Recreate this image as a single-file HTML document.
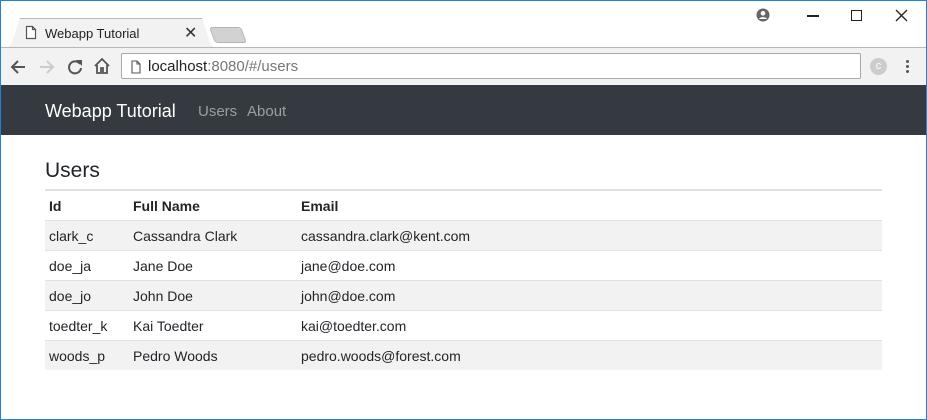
<!DOCTYPE html>
<html><head><style>
*{margin:0;padding:0;box-sizing:border-box}
body{width:927px;height:420px;overflow:hidden;background:#fff;font-family:"Liberation Sans",sans-serif;position:relative}
.frame{position:absolute;inset:0;border:1px solid #1a84d8;pointer-events:none;z-index:10}
.abs{position:absolute}
.tab{position:absolute;left:10px;top:18px;width:202px;height:30px;background:#f2f2f2;border:1px solid #b8b8b8;border-bottom:none;clip-path:polygon(0 100%,10px 0,calc(100% - 10px) 0,100% 100%);}
.toolbar{position:absolute;left:0;top:47px;width:927px;height:38px;background:#f2f2f2;border-top:1px solid #b8b8b8}
.addr{position:absolute;left:121px;top:5px;width:740px;height:26px;background:#fff;border:1px solid #a9a9a9;border-radius:2px}
.nav{position:absolute;left:0;top:85px;width:927px;height:50px;background:#343a40}
table{position:absolute;left:45px;top:189px;width:837px;border-collapse:collapse;font-size:14px;color:#212529}
td,th{height:30px;padding:1px 4px 0;text-align:left;border-top:1px solid #dee2e6;vertical-align:middle}
th{font-weight:bold;border-top:2px solid #dee2e6;border-bottom:1px solid #dee2e6;height:30px}
tr.s td{background:#f2f2f2}
</style></head><body>
<div class="frame"></div>
<div class="tab"></div>
<svg class="abs" style="left:25px;top:25px" width="12" height="15"><path d="M1.5 1.5h6l3 3v9h-9z M7.5 1.5v3h3" fill="#fff" stroke="#555" stroke-width="1.2"/></svg>
<div class="abs" style="left:45px;top:26px;font-size:13px;color:#222">Webapp Tutorial</div>
<div class="abs" style="left:184px;top:23px;font-size:16px;color:#333">✕</div>
<div class="abs" style="left:212px;top:27px;width:32px;height:16px;background:#d2d2d2;border:1px solid #b5b5b5;border-radius:3px;transform:skewX(20deg)"></div>
<svg class="abs" style="left:756px;top:8px" width="14" height="14"><circle cx="7" cy="7" r="6.5" fill="#666"/><circle cx="7" cy="5.3" r="2.3" fill="#fff"/><path d="M3 11c1-2.5 7-2.5 8 0" fill="#fff"/></svg>
<div class="abs" style="left:807px;top:15px;width:12px;height:1.5px;background:#222"></div>
<div class="abs" style="left:851px;top:10px;width:11px;height:11px;border:1.3px solid #222"></div>
<svg class="abs" style="left:895px;top:9px" width="13" height="13"><path d="M1 1L12 12M12 1L1 12" stroke="#222" stroke-width="1.3"/></svg>
<div class="toolbar">
<svg class="abs" style="left:10px;top:11px" width="16" height="16"><path d="M15 8H2M8 2L2 8l6 6" fill="none" stroke="#555" stroke-width="2"/></svg>
<svg class="abs" style="left:39px;top:11px" width="16" height="16"><path d="M1 8h13M8 2l6 6-6 6" fill="none" stroke="#ccc" stroke-width="2"/></svg>
<svg class="abs" style="left:67px;top:11px" width="16" height="16"><path d="M13 5A6 6 0 1 0 14 9" fill="none" stroke="#555" stroke-width="2"/><path d="M9 1h6v6z" fill="#555"/></svg>
<svg class="abs" style="left:93px;top:9px" width="18" height="18"><path d="M2 9L9 2l7 7M4 8v8h4v-5h2v5h4V8" fill="none" stroke="#555" stroke-width="1.8"/></svg>
<div class="addr">
<svg class="abs" style="left:9px;top:6px" width="11" height="14"><path d="M1 1h5l3 3v9H1z M6 1v3h3" fill="none" stroke="#555" stroke-width="1.1"/></svg>
<div class="abs" style="left:26px;top:4px;font-size:15px;color:#222">localhost<span style="color:#777">:8080/#/users</span></div>
</div>
<div class="abs" style="left:870px;top:10px;width:17px;height:17px;border-radius:50%;background:#ccc;color:#fff;font-size:11px;text-align:center;line-height:17px">c</div>
<div class="abs" style="left:906px;top:12px;width:3px;height:3px;background:#555;border-radius:50%;box-shadow:0 5px 0 #555,0 10px 0 #555"></div>
</div>
<div class="nav">
<div class="abs" style="left:45px;top:16px;font-size:18px;color:#fff">Webapp Tutorial</div>
<div class="abs" style="left:198px;top:18px;font-size:15px;color:rgba(255,255,255,.5)">Users</div>
<div class="abs" style="left:247px;top:18px;font-size:15px;color:rgba(255,255,255,.5)">About</div>
</div>
<div class="abs" style="left:45px;top:159px;font-size:21px;color:#212529">Users</div>
<table>
<colgroup><col style="width:84px"><col style="width:168px"><col></colgroup>
<tr><th>Id</th><th>Full Name</th><th>Email</th></tr>
<tr class="s"><td>clark_c</td><td>Cassandra Clark</td><td>cassandra.clark@kent.com</td></tr>
<tr><td>doe_ja</td><td>Jane Doe</td><td>jane@doe.com</td></tr>
<tr class="s"><td>doe_jo</td><td>John Doe</td><td>john@doe.com</td></tr>
<tr><td>toedter_k</td><td>Kai Toedter</td><td>kai@toedter.com</td></tr>
<tr class="s"><td>woods_p</td><td>Pedro Woods</td><td>pedro.woods@forest.com</td></tr>
</table>
</body></html>
